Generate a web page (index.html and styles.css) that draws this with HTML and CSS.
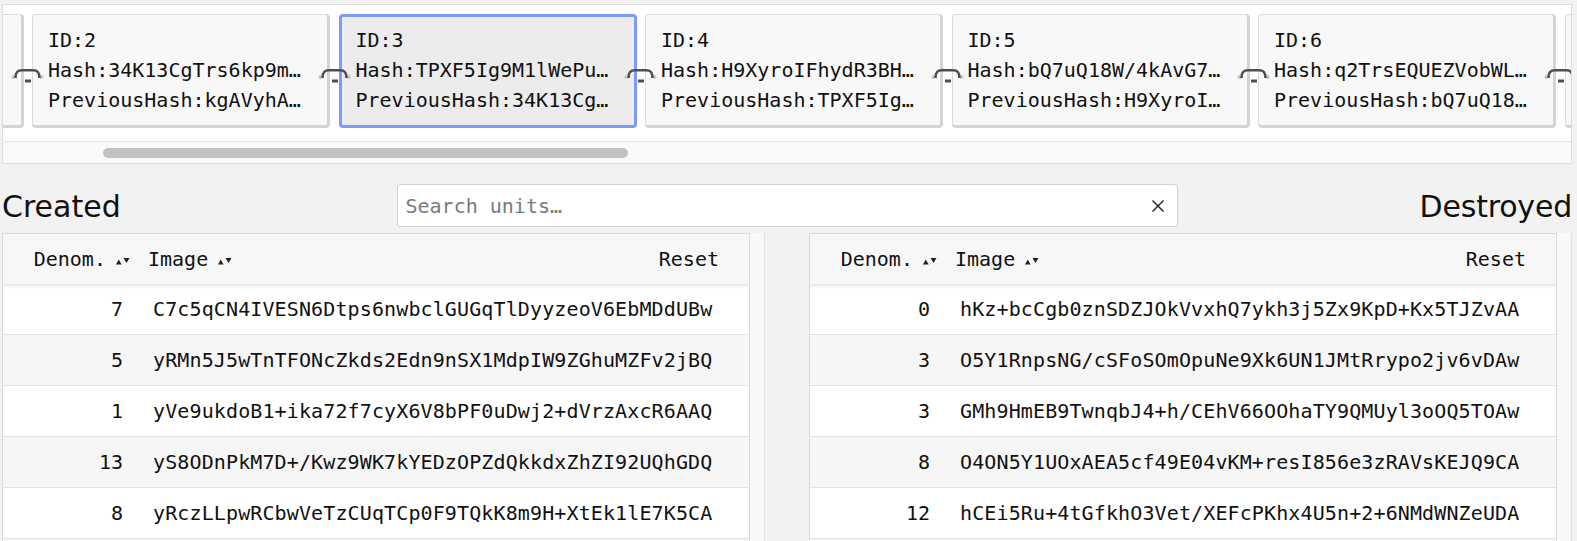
FILE: index.html
```html
<!DOCTYPE html>
<html>
<head>
<meta charset="utf-8">
<link rel="stylesheet" href="styles.css">
</head>
<body>
<div class="page">
  <section class="chain">
    <div class="chain-view">
      <div class="chain-strip">
        <div class="block"></div>
        <div class="block">
          <svg class="link" viewBox="0 0 33 16" width="33" height="16"><circle cx="2.5" cy="9" r="2" fill="#c4c4c4"/><circle cx="30.5" cy="9" r="2" fill="#c4c4c4"/><path d="M4.5 10 C4.5 4 6.5 2.2 11 2.2 H22 C26.5 2.2 28.5 4 28.5 10" fill="none" stroke="#4e4e4e" stroke-width="2.6"/><rect x="14" y="11.5" width="6" height="3" fill="#4e4e4e"/></svg>
          <div class="line">ID:2</div>
          <div class="line">Hash:34K13CgTrs6kp9m…</div>
          <div class="line">PreviousHash:kgAVyhA…</div>
        </div>
        <div class="block selected">
          <svg class="link" viewBox="0 0 33 16" width="33" height="16"><circle cx="2.5" cy="9" r="2" fill="#c4c4c4"/><circle cx="30.5" cy="9" r="2" fill="#c4c4c4"/><path d="M4.5 10 C4.5 4 6.5 2.2 11 2.2 H22 C26.5 2.2 28.5 4 28.5 10" fill="none" stroke="#4e4e4e" stroke-width="2.6"/><rect x="14" y="11.5" width="6" height="3" fill="#4e4e4e"/></svg>
          <div class="line">ID:3</div>
          <div class="line">Hash:TPXF5Ig9M1lWePu…</div>
          <div class="line">PreviousHash:34K13Cg…</div>
        </div>
        <div class="block">
          <svg class="link" viewBox="0 0 33 16" width="33" height="16"><circle cx="2.5" cy="9" r="2" fill="#c4c4c4"/><circle cx="30.5" cy="9" r="2" fill="#c4c4c4"/><path d="M4.5 10 C4.5 4 6.5 2.2 11 2.2 H22 C26.5 2.2 28.5 4 28.5 10" fill="none" stroke="#4e4e4e" stroke-width="2.6"/><rect x="14" y="11.5" width="6" height="3" fill="#4e4e4e"/></svg>
          <div class="line">ID:4</div>
          <div class="line">Hash:H9XyroIFhydR3BH…</div>
          <div class="line">PreviousHash:TPXF5Ig…</div>
        </div>
        <div class="block">
          <svg class="link" viewBox="0 0 33 16" width="33" height="16"><circle cx="2.5" cy="9" r="2" fill="#c4c4c4"/><circle cx="30.5" cy="9" r="2" fill="#c4c4c4"/><path d="M4.5 10 C4.5 4 6.5 2.2 11 2.2 H22 C26.5 2.2 28.5 4 28.5 10" fill="none" stroke="#4e4e4e" stroke-width="2.6"/><rect x="14" y="11.5" width="6" height="3" fill="#4e4e4e"/></svg>
          <div class="line">ID:5</div>
          <div class="line">Hash:bQ7uQ18W/4kAvG7…</div>
          <div class="line">PreviousHash:H9XyroI…</div>
        </div>
        <div class="block">
          <svg class="link" viewBox="0 0 33 16" width="33" height="16"><circle cx="2.5" cy="9" r="2" fill="#c4c4c4"/><circle cx="30.5" cy="9" r="2" fill="#c4c4c4"/><path d="M4.5 10 C4.5 4 6.5 2.2 11 2.2 H22 C26.5 2.2 28.5 4 28.5 10" fill="none" stroke="#4e4e4e" stroke-width="2.6"/><rect x="14" y="11.5" width="6" height="3" fill="#4e4e4e"/></svg>
          <div class="line">ID:6</div>
          <div class="line">Hash:q2TrsEQUEZVobWL…</div>
          <div class="line">PreviousHash:bQ7uQ18…</div>
        </div>
        <div class="block">
          <svg class="link" viewBox="0 0 33 16" width="33" height="16"><circle cx="2.5" cy="9" r="2" fill="#c4c4c4"/><circle cx="30.5" cy="9" r="2" fill="#c4c4c4"/><path d="M4.5 10 C4.5 4 6.5 2.2 11 2.2 H22 C26.5 2.2 28.5 4 28.5 10" fill="none" stroke="#4e4e4e" stroke-width="2.6"/><rect x="14" y="11.5" width="6" height="3" fill="#4e4e4e"/></svg>
        </div>
      </div>
    </div>
    <div class="hscroll"><div class="hthumb"></div></div>
  </section>

  <div class="toolbar">
    <h2 class="title">Created</h2>
    <div class="search">
      <span class="placeholder">Search units…</span>
      <svg class="clear" viewBox="0 0 16 16" width="16" height="16"><path d="M2.5 2.5 L13.5 13.5 M13.5 2.5 L2.5 13.5" stroke="#2b2b2b" stroke-width="1.5" fill="none"/></svg>
    </div>
    <h2 class="title right">Destroyed</h2>
  </div>

  <div class="tables">
    <div class="col">
      <div class="table">
        <div class="thead">
          <div class="th num">Denom. <svg class="sort" viewBox="0 0 14 8" width="14" height="8"><polygon points="0,7.5 2.8,2.5 5.6,7.5" fill="#222"/><polygon points="7.5,1 13.5,1 10.5,6" fill="#222"/></svg></div>
          <div class="th img">Image <svg class="sort" viewBox="0 0 14 8" width="14" height="8"><polygon points="0,7.5 2.8,2.5 5.6,7.5" fill="#222"/><polygon points="7.5,1 13.5,1 10.5,6" fill="#222"/></svg></div>
          <div class="th reset">Reset</div>
        </div>
        <div class="row"><div class="td num">7</div><div class="td img">C7c5qCN4IVESN6Dtps6nwbclGUGqTlDyyzeoV6EbMDdUBw</div></div>
        <div class="row"><div class="td num">5</div><div class="td img">yRMn5J5wTnTFONcZkds2Edn9nSX1MdpIW9ZGhuMZFv2jBQ</div></div>
        <div class="row"><div class="td num">1</div><div class="td img">yVe9ukdoB1+ika72f7cyX6V8bPF0uDwj2+dVrzAxcR6AAQ</div></div>
        <div class="row"><div class="td num">13</div><div class="td img">yS8ODnPkM7D+/Kwz9WK7kYEDzOPZdQkkdxZhZI92UQhGDQ</div></div>
        <div class="row"><div class="td num">8</div><div class="td img">yRczLLpwRCbwVeTzCUqTCp0F9TQkK8m9H+XtEk1lE7K5CA</div></div>
        <div class="row"></div>
      </div>
      <div class="vtrack"></div>
    </div>
    <div class="col">
      <div class="table">
        <div class="thead">
          <div class="th num">Denom. <svg class="sort" viewBox="0 0 14 8" width="14" height="8"><polygon points="0,7.5 2.8,2.5 5.6,7.5" fill="#222"/><polygon points="7.5,1 13.5,1 10.5,6" fill="#222"/></svg></div>
          <div class="th img">Image <svg class="sort" viewBox="0 0 14 8" width="14" height="8"><polygon points="0,7.5 2.8,2.5 5.6,7.5" fill="#222"/><polygon points="7.5,1 13.5,1 10.5,6" fill="#222"/></svg></div>
          <div class="th reset">Reset</div>
        </div>
        <div class="row"><div class="td num">0</div><div class="td img">hKz+bcCgb0znSDZJOkVvxhQ7ykh3j5Zx9KpD+Kx5TJZvAA</div></div>
        <div class="row"><div class="td num">3</div><div class="td img">O5Y1RnpsNG/cSFoSOmOpuNe9Xk6UN1JMtRrypo2jv6vDAw</div></div>
        <div class="row"><div class="td num">3</div><div class="td img">GMh9HmEB9TwnqbJ4+h/CEhV66OOhaTY9QMUyl3oOQ5TOAw</div></div>
        <div class="row"><div class="td num">8</div><div class="td img">O4ON5Y1UOxAEA5cf49E04vKM+resI856e3zRAVsKEJQ9CA</div></div>
        <div class="row"><div class="td num">12</div><div class="td img">hCEi5Ru+4tGfkhO3Vet/XEFcPKhx4U5n+2+6NMdWNZeUDA</div></div>
        <div class="row"></div>
      </div>
      <div class="vtrack"></div>
    </div>
  </div>
</div>
</body>
</html>
```

FILE: styles.css
```css
* { box-sizing: border-box; }

html, body {
  margin: 0;
  padding: 0;
  height: 541px;
  overflow: hidden;
  background: #f2f2f2;
}

.page {
  padding: 4px 5px 0 2px;
  font-family: "DejaVu Sans Mono", "Liberation Mono", monospace;
  font-size: 20px;
  color: #111;
}

/* ---------- chain panel ---------- */
.chain {
  background: #fff;
  border: 1px solid #dedede;
  height: 160px;
  display: flex;
  flex-direction: column;
}

.chain-view {
  overflow: hidden;
  padding: 9px 0 13px 0;
}

.chain-strip {
  display: flex;
  gap: 8.5px;
  margin-left: -277.5px;
}

.block {
  position: relative;
  flex: 0 0 298px;
  height: 114px;
  background: #f8f8f8;
  border-style: solid;
  border-color: #dcdcdc #d4d4d4 #d4d4d4 #dcdcdc;
  border-width: 1px 3px 3px 1px;
  border-radius: 4px;
  padding: 10px 10px 0 15px;
  white-space: nowrap;
}

.block.selected {
  background: #ececec;
  border: 3px solid #7d9bf6;
  padding: 8px 10px 0 14px;
}

.line {
  height: 30px;
  line-height: 30px;
}

.link {
  position: absolute;
  left: -22px;
  top: 53px;
  display: block;
}

.block.selected .link {
  left: -24px;
  top: 51px;
}

.hscroll {
  flex: 1;
  background: #fafafa;
  border-top: 1px solid #e4e4e4;
  padding: 6px 0 0 100px;
}

.hthumb {
  width: 525px;
  height: 10px;
  border-radius: 5px;
  background: #c2c2c2;
}

/* ---------- toolbar ---------- */
.toolbar {
  display: grid;
  grid-template-columns: 1fr 781px 1fr;
  align-items: center;
  margin-top: 20px;
  height: 43px;
}

.title {
  margin: 0;
  font-family: "DejaVu Sans", "Liberation Sans", sans-serif;
  font-weight: normal;
  font-size: 30px;
  line-height: 35px;
  color: #111;
  padding-top: 1px;
}

.title.right {
  text-align: right;
  letter-spacing: -0.2px;
}

.search {
  height: 43px;
  background: #fff;
  border: 1px solid #d2d2d2;
  border-radius: 3px;
  display: flex;
  align-items: center;
  justify-content: space-between;
  padding: 0 11px 0 8px;
}

.placeholder {
  color: #7a7a7a;
}

.clear {
  display: block;
}

/* ---------- tables ---------- */
.tables {
  display: grid;
  grid-template-columns: 1fr 1fr;
  column-gap: 44px;
  margin-top: 6px;
}

.col {
  display: flex;
  height: 308px;
}

.table {
  flex: 1;
  background: #fff;
  border: 1px solid #dadada;
  border-bottom: none;
  overflow: hidden;
}

.vtrack {
  width: 15px;
  background: #f8f8f8;
  border-right: 1px solid #e2e2e2;
}

.thead {
  position: relative;
  z-index: 1;
  height: 50px;
  display: grid;
  grid-template-columns: 136px 1fr auto;
  align-items: center;
  background: #f7f7f7;
  box-shadow: 0 2px 3px rgba(0, 0, 0, 0.12);
}

.th {
  white-space: nowrap;
}

.th.num {
  text-align: right;
  padding-right: 9px;
}

.th.img {
  padding-left: 9px;
}

.th.reset {
  padding-right: 30px;
}

.sort {
  display: inline-block;
  vertical-align: 1px;
  margin-left: -2px;
}

.row {
  display: grid;
  grid-template-columns: 136px 1fr;
  align-items: center;
  height: 51px;
  border-bottom: 1px solid #e2e2e2;
}

.row:nth-child(odd) {
  background: #f6f6f6;
}

.td.num {
  text-align: right;
  padding-right: 16px;
}

.td.img {
  padding-left: 14px;
  letter-spacing: 0.12px;
  white-space: nowrap;
}
```
